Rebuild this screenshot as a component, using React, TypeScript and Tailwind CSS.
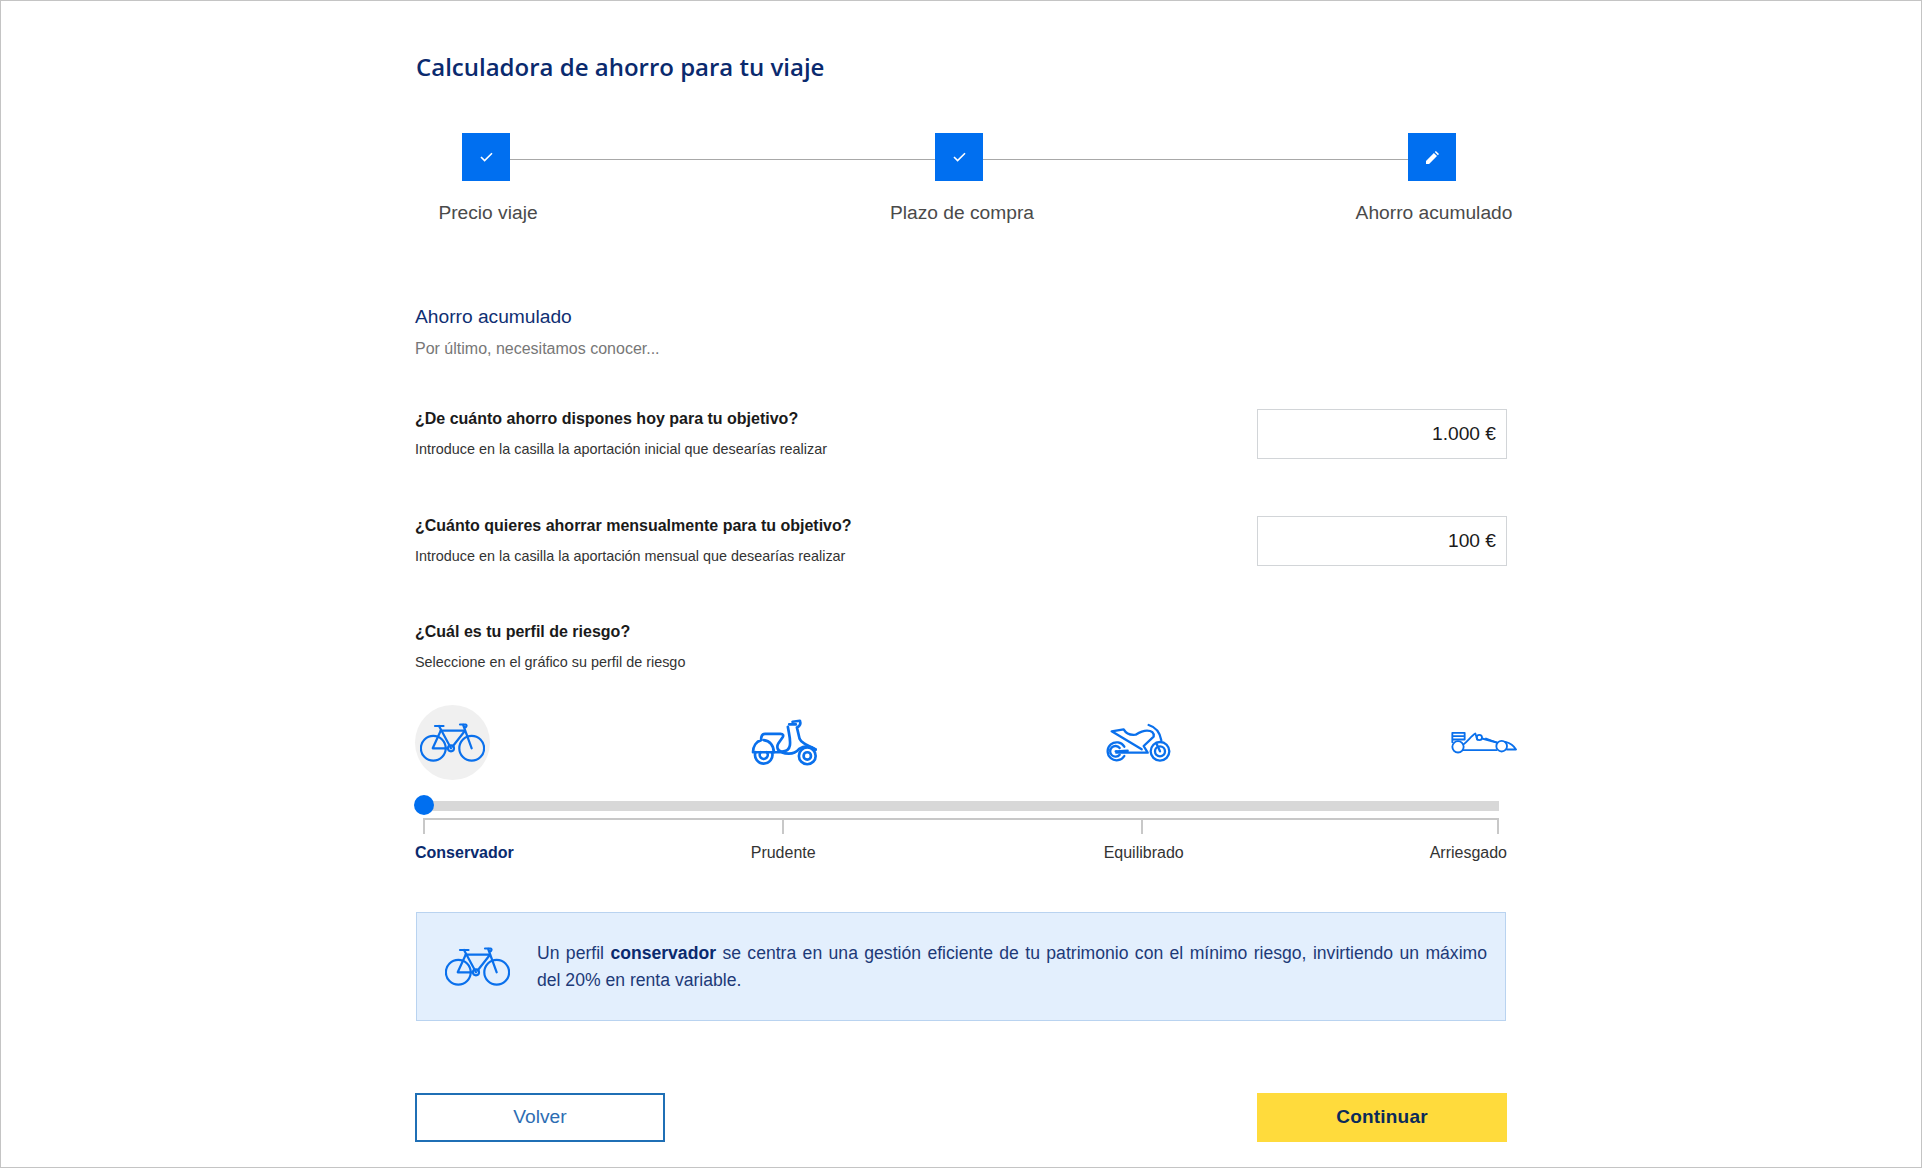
const BLUE = "#0a70ec";

function Bike({ className }: { className?: string }) {
  return (
    <svg viewBox="0 0 65 39" className={className} fill="none" stroke={BLUE} strokeWidth="2.2" strokeLinecap="round" strokeLinejoin="round">
      <circle cx="13.3" cy="25.3" r="12.4" />
      <circle cx="51.7" cy="25.3" r="12.4" />
      <circle cx="31" cy="25.3" r="3" />
      <path d="M15 3h8.5M19 3l12 22.3" />
      <path d="M20.7 7.7H45L32.6 23.5" />
      <path d="M20.7 7.7 12.7 25.3H28" />
      <path d="M40 1.5h5.5c1.5 0 1.5 3-1.2 3.4M43 1.5l8.7 23.8" />
    </svg>
  );
}

function Scooter({ className }: { className?: string }) {
  return (
    <svg viewBox="32 28 200 140" className={className} fill="none" stroke={BLUE} strokeWidth="8" strokeLinecap="round" strokeLinejoin="round">
      <path d="M45.3 127A26 26 0 1 0 94.7 127" />
      <path d="M61 127A12 12 0 1 0 79 127" />
      <circle cx="200" cy="138" r="25" />
      <circle cx="200" cy="138" r="11" />
      <path d="M38 127h62c0-20-12-34-30-36M38 127c0-18 10-32 24-36 0-12 3-19 12-19h46c8 0 10 5 6 11l-12 17c-6 10-4 24 10 25 14 0 22-6 24-18 3-18-3-36-6-56" />
      <path d="M100 127h22c22 8 42 4 54-10 14-10 34-10 49 2" />
      <path d="M146 44h20M156 36l22-3c3 8 0 16-9 20l8 34c4 10 16 16 48 32" />
    </svg>
  );
}

function Moto({ className }: { className?: string }) {
  return (
    <svg viewBox="32 38 198 118" className={className} fill="none" stroke={BLUE} strokeWidth="7" strokeLinecap="round" strokeLinejoin="round">
      <circle cx="197" cy="122" r="28" />
      <circle cx="197" cy="122" r="15" />
      <path d="M197 122l-10-22" />
      <path d="M90 108A27 27 0 1 0 90 136M76 112a16 16 0 1 0 0 20M66 122h-2" />
      <path d="M66 122l34-2M66 126h94l-12-20 30-28c2-12-6-18-20-18-14 0-24 6-34 12-16 2-28-2-36-16l-36 6 90 54" />
      <path d="M163 43c20 6 34 22 38 46" />
    </svg>
  );
}

function Formula({ className }: { className?: string }) {
  return (
    <svg viewBox="35 50 198 68" className={className} fill="none" stroke={BLUE} strokeWidth="5.5" strokeLinecap="round" strokeLinejoin="round">
      <path d="M39 55h37v20H39zM39 65h37M39 55v28" />
      <circle cx="56" cy="97" r="17" />
      <circle cx="187" cy="95" r="16" />
      <circle cx="120" cy="69" r="8" />
      <path d="M72 90c14-10 24-26 36-33l6 18M128 72l44 12" />
      <path d="M73 107h98" />
      <path d="M140 72l32 12M198 82c16 4 26 12 32 23h-27" />
    </svg>
  );
}

function Check() {
  return (
    <svg viewBox="0 0 13 10" className="h-[10px] w-[13px]" fill="none" stroke="#fff" strokeWidth="1.6">
      <path d="M1 5l3.6 3.6L12 1.2" />
    </svg>
  );
}

function Pencil() {
  return (
    <svg viewBox="0 0 13 13" className="h-[13px] w-[13px]" fill="#fff">
      <path d="M0 13V9.9L7.9 2l3.1 3.1L3.1 13zM8.8 1.1 9.9 0 13 3.1 11.9 4.2z" />
    </svg>
  );
}

function Step({ children }: { children: React.ReactNode }) {
  return <div className="flex h-12 w-12 shrink-0 items-center justify-center bg-[#006ff0]">{children}</div>;
}

function Question({ title, hint }: { title: string; hint: string }) {
  return (
    <div className="pt-px">
      <p className="text-[16px] leading-5 font-bold text-[#1a1a1a]">{title}</p>
      <p className="mt-[10px] text-[14.4px] leading-5 text-[#333]">{hint}</p>
    </div>
  );
}

function Amount({ value }: { value: string }) {
  return (
    <div className="mt-px flex h-[50px] w-[250px] items-center justify-end border border-[#d2d5d8] pr-[10px] text-[19.2px] text-[#1a1a1a]">
      {value}
    </div>
  );
}

export default function App() {
  return (
    <div className="h-[1168px] w-[1922px] overflow-hidden border border-[#c4c4c4] bg-white font-['Liberation_Sans',Arial,sans-serif]">
      <div className="mx-auto w-[1092px] pt-[50px]">
        <h1 className="ml-px h-8 font-['Open_Sans',sans-serif] text-[24px] leading-8 font-semibold text-[#0a2a6e]">
          Calculadora de ahorro para tu viaje
        </h1>

        <div className="mt-[50px] flex items-start pr-[51px] pl-[47px]">
          <Step><Check /></Step>
          <div className="mt-[26px] h-px flex-1 bg-[#a8a8a8]" />
          <Step><Check /></Step>
          <div className="mt-[26px] h-px flex-1 bg-[#a8a8a8]" />
          <Step><Pencil /></Step>
        </div>
        <div className="mt-[20px] flex justify-between px-[2px] text-[19.2px] leading-6 text-[#4a4a4a]">
          <p className="w-[142px] text-center whitespace-nowrap">Precio viaje</p>
          <p className="w-[142px] text-center whitespace-nowrap">Plazo de compra</p>
          <p className="flex w-[142px] justify-center whitespace-nowrap">Ahorro acumulado</p>
        </div>

        <h2 className="mt-[80px] text-[19.2px] leading-6 text-[#0f2f73]">Ahorro acumulado</h2>
        <p className="mt-[10px] text-[16px] leading-5 text-[#777]">Por último, necesitamos conocer...</p>

        <div className="mt-[49px] flex items-start justify-between">
          <Question title="¿De cuánto ahorro dispones hoy para tu objetivo?" hint="Introduce en la casilla la aportación inicial que desearías realizar" />
          <Amount value="1.000 €" />
        </div>
        <div className="mt-[56px] flex items-start justify-between">
          <Question title="¿Cuánto quieres ahorrar mensualmente para tu objetivo?" hint="Introduce en la casilla la aportación mensual que desearías realizar" />
          <Amount value="100 €" />
        </div>
        <div className="mt-[55px]">
          <Question title="¿Cuál es tu perfil de riesgo?" hint="Seleccione en el gráfico su perfil de riesgo" />
        </div>

        <div className="mt-[33px] flex h-[75px] items-center">
          <div className="flex h-[75px] w-[75px] shrink-0 items-center justify-center rounded-full bg-[#f0f0f0]">
            <Bike className="h-[39px] w-[65px]" />
          </div>
          <Scooter className="ml-[261px] h-[47px] w-[67px] shrink-0" />
          <Moto className="ml-[287px] h-[40px] w-[66px] shrink-0" />
          <Formula className="ml-[280px] h-[23px] w-[66px] shrink-0" />
        </div>

        <div className="relative mt-[15px] ml-[9px] h-5 w-[1075px] pt-[6px]">
          <div className="h-[10px] bg-[#d8d8d8]" />
          <div className="absolute top-0 -left-[10px] h-5 w-5 rounded-full bg-[#006ff0]" />
        </div>
        <div className="mt-[3px] ml-[8px] flex h-[16px] w-[1076px] border-t-2 border-[#c8c8c8]">
          <div className="w-[2px] bg-[#c8c8c8]" />
          <div className="ml-[357px] w-[2px] bg-[#c8c8c8]" />
          <div className="ml-[357px] w-[2px] bg-[#c8c8c8]" />
          <div className="ml-auto w-[2px] bg-[#c8c8c8]" />
        </div>
        <div className="mt-[9px] flex text-[16px] leading-5 text-[#333]">
          <p className="font-bold text-[#0a2a6e]">Conservador</p>
          <p className="ml-[237px]">Prudente</p>
          <p className="ml-[288px]">Equilibrado</p>
          <p className="ml-auto">Arriesgado</p>
        </div>

        <div className="mt-[49px] mr-px ml-px flex h-[109px] items-center border border-[#b9d3f0] bg-[#e3effd] pr-[18px] pl-[28px]">
          <Bike className="h-[39px] w-[65px] shrink-0" />
          <p className="ml-[27px] text-justify text-[17.6px] leading-[27px] text-[#1d3a78]">
            Un perfil <b className="text-[#0a2a6e]">conservador</b> se centra en una gestión eficiente de tu patrimonio con el mínimo riesgo, invirtiendo un máximo del 20% en renta variable.
          </p>
        </div>

        <div className="mt-[72px] flex justify-between">
          <button className="h-[49px] w-[250px] border-2 border-[#1f6fb5] text-[19.2px] text-[#2d6db3]">Volver</button>
          <button className="h-[49px] w-[250px] bg-[#ffdb3c] text-[19px] font-bold tracking-[0.2px] text-[#0b2a5a]">Continuar</button>
        </div>
      </div>
    </div>
  );
}
